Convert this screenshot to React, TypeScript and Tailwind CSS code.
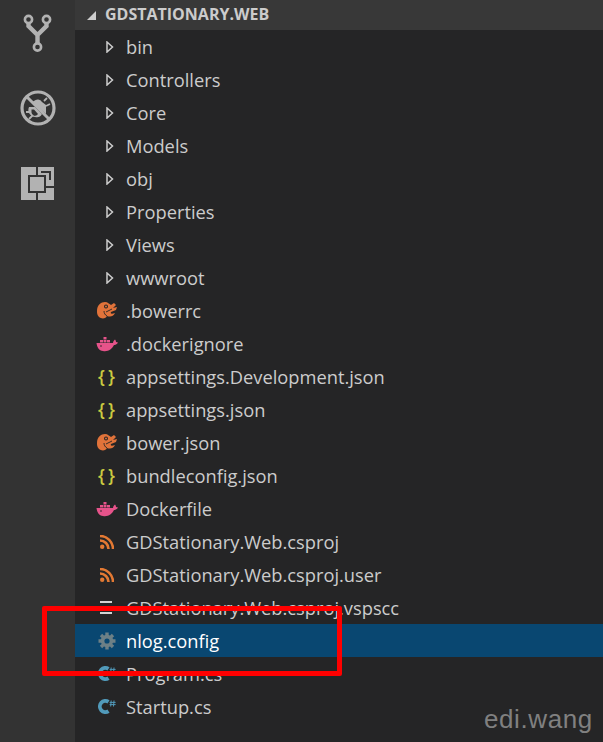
const folders = ['bin', 'Controllers', 'Core', 'Models', 'obj', 'Properties', 'Views', 'wwwroot']

type FileKind = 'bower' | 'docker' | 'json' | 'rss' | 'lines' | 'gear' | 'csharp'

const files: { name: string; kind: FileKind; selected?: boolean }[] = [
  { name: '.bowerrc', kind: 'bower' },
  { name: '.dockerignore', kind: 'docker' },
  { name: 'appsettings.Development.json', kind: 'json' },
  { name: 'appsettings.json', kind: 'json' },
  { name: 'bower.json', kind: 'bower' },
  { name: 'bundleconfig.json', kind: 'json' },
  { name: 'Dockerfile', kind: 'docker' },
  { name: 'GDStationary.Web.csproj', kind: 'rss' },
  { name: 'GDStationary.Web.csproj.user', kind: 'rss' },
  { name: 'GDStationary.Web.csproj.vspscc', kind: 'lines' },
  { name: 'nlog.config', kind: 'gear', selected: true },
  { name: 'Program.cs', kind: 'csharp' },
  { name: 'Startup.cs', kind: 'csharp' },
]

function GitIcon() {
  return (
    <svg width="30" height="39" viewBox="0 0 30 39" fill="none" stroke="#b2b2b2">
      <circle cx="5.5" cy="5.5" r="3.6" strokeWidth="2.6" />
      <circle cx="23.5" cy="5.5" r="3.6" strokeWidth="2.6" />
      <circle cx="14.5" cy="33" r="3.6" strokeWidth="2.6" />
      <path d="M5.5 9 V12 L14.5 21 L23.5 12 V9 M14.5 21 V29" strokeWidth="4.4" />
    </svg>
  )
}

function DebugIcon() {
  return (
    <svg width="36" height="36" viewBox="0 0 36 36" fill="none" stroke="#b2b2b2">
      <circle cx="18" cy="18" r="16" strokeWidth="3.2" />
      <path d="M7 7 L29 29" strokeWidth="3" />
      {/* bug, split in two by the slash */}
      <path d="M14 11 a5 5 0 0 1 8 1 L26 15 V24 L12 12 Z" fill="#b2b2b2" stroke="none" />
      <path d="M9 17 h6 l7 7 a6 6 0 0 1 -7 3 a7 7 0 0 1 -6 -10 Z" fill="#b2b2b2" stroke="none" />
      <path d="M11.5 19.5 h2.5 l4 4.5 a3.5 3.5 0 0 1 -6.5 -1.5 Z" fill="#333333" stroke="none" />
      <path d="M6 22 l4 0 M9 29 l4 -4 M27 8 l-3 3 M30 14 l-4 2" strokeWidth="1.8" />
    </svg>
  )
}

function ExtensionsIcon() {
  return (
    <svg width="33" height="33" viewBox="0 0 33 33">
      <rect width="33" height="33" fill="#b2b2b2" />
      <rect x="8" y="9" width="16" height="16" fill="#b2b2b2" stroke="#333333" strokeWidth="2" />
      <path d="M16 0 V8 M16 26 V33 M25 20 H33" stroke="#333333" strokeWidth="2" fill="none" />
      <path d="M20 5 H29 V13" stroke="#333333" strokeWidth="2" fill="none" />
    </svg>
  )
}

function BowerIcon() {
  return (
    <svg width="20" height="17" viewBox="0 0 20 17">
      <path d="M0 9 C0 3 4 0 8 0 C11 0 12 2 14 3 L17 1 L19 3 L16 6 L20 5 L19 8 L14 10 C13 12 15 12 18 11 C16 15 13 15 10 14 C9 17 4 17 2 15 C0 13 0 11 0 9 Z" fill="#e1733a" />
      <circle cx="9" cy="4.5" r="2" fill="#252526" />
      <circle cx="9" cy="4.5" r="1" fill="#e1733a" />
      <path d="M15 7 L9 10 M10 14 C8 13 7 11 7 9" stroke="#252526" strokeWidth="0.9" fill="none" />
    </svg>
  )
}

function DockerIcon() {
  return (
    <svg width="22" height="16" viewBox="0 0 22 16">
      <path d="M0.5 7 H17 C17 5 18.5 4 19 3.5 C20 4.5 20 6 20 6 L22 6.5 C21 8.5 19 9 18 9 C16 13 12 16 7 15 C3 15 1 11 0.5 7 Z" fill="#e6538a" />
      <path d="M4 4 h3 v2.5 h-3 Z M7.5 4 h3 v2.5 h-3 Z M11 4 h3 v2.5 h-3 Z M7.5 1 h3 v2.5 h-3 Z" fill="#e6538a" />
      <circle cx="5" cy="10" r="0.8" fill="#252526" />
    </svg>
  )
}

function RssIcon() {
  return (
    <svg width="14" height="14" viewBox="0 0 14 14" fill="none" stroke="#e37933">
      <circle cx="2.2" cy="11.8" r="2.2" fill="#e37933" stroke="none" />
      <path d="M0 5.5 A8.5 8.5 0 0 1 8.5 14" strokeWidth="2.6" />
      <path d="M0 1 A13 13 0 0 1 13 14" strokeWidth="2.6" />
    </svg>
  )
}

function LinesIcon() {
  return (
    <svg width="13" height="13" viewBox="0 0 13 13" fill="#d4d4d4">
      <rect x="0" y="0" width="12" height="2" />
      <rect x="3" y="5" width="9" height="2" />
      <rect x="0" y="11" width="12" height="2" />
    </svg>
  )
}

function GearIcon() {
  return (
    <svg width="18" height="18" viewBox="0 0 18 18" fill="none" stroke="#6d8086">
      <circle cx="9" cy="9" r="4.4" strokeWidth="3.6" />
      <path
        d="M9 0.5 V4 M9 14 V17.5 M0.5 9 H4 M14 9 H17.5 M3 3 L5.4 5.4 M12.6 12.6 L15 15 M15 3 L12.6 5.4 M5.4 12.6 L3 15"
        strokeWidth="3.4"
      />
    </svg>
  )
}

function CsharpIcon() {
  return (
    <svg width="18" height="17" viewBox="0 0 18 17" fill="none" stroke="#519aba">
      <path d="M10.5 3.8 A5.6 5.6 0 1 0 10.5 13.2" strokeWidth="3.8" />
      <path d="M13.2 2.5 L12.7 8.5 M16 2.5 L15.5 8.5 M11.6 4.4 H17.6 M11.6 6.6 H17.6" strokeWidth="1" />
    </svg>
  )
}

function FileIcon({ kind }: { kind: FileKind }) {
  switch (kind) {
    case 'bower': return <BowerIcon />
    case 'docker': return <DockerIcon />
    case 'json':
      return (
        <span className="flex gap-[3px] text-[18px] font-semibold text-[#cbcb41]">
          <span>{'{'}</span>
          <span>{'}'}</span>
        </span>
      )
    case 'rss': return <RssIcon />
    case 'lines': return <LinesIcon />
    case 'gear': return <GearIcon />
    case 'csharp': return <CsharpIcon />
  }
}

export default function App() {
  return (
    <div className="relative flex h-[742px] w-[603px] overflow-hidden bg-[#252526] font-['Open_Sans',sans-serif] text-[18.3px] text-[#cccccc]">
      <div className="flex w-[75px] shrink-0 flex-col items-center bg-[#333333] pt-[14px]">
        <GitIcon />
        <div className="mt-[37px]"><DebugIcon /></div>
        <div className="mt-[41px]"><ExtensionsIcon /></div>
      </div>

      <div className="min-w-0 flex-1">
        <div className="flex h-[30px] items-center bg-[#383838] pl-[12px]">
          <svg width="9" height="9" viewBox="0 0 9 9" className="mr-[9px]"><path d="M9 0 V9 H0 Z" fill="#cccccc" /></svg>
          <span className="pb-[2px] text-[16px] font-bold text-[#cccccc]">GDSTATIONARY.WEB</span>
        </div>

        {folders.map(name => (
          <div key={name} className="flex h-[33px] items-center">
            <svg width="8" height="12" viewBox="0 0 8 12" className="ml-[31px] mr-[12px]" fill="none" stroke="#cccccc" strokeWidth="1.5">
              <path d="M1 1 L6.5 6 L1 11 Z" />
            </svg>
            <span>{name}</span>
          </div>
        ))}

        {files.map(file => (
          <div key={file.name} className={`flex h-[33px] items-center ${file.selected ? 'bg-[#094771] text-white' : ''}`}>
            <div className="ml-[19px] mr-[7px] flex w-[25px] items-center justify-center">
              <FileIcon kind={file.kind} />
            </div>
            <span>{file.name}</span>
          </div>
        ))}
      </div>

      {/* annotation box drawn over the tree */}
      <div className="absolute left-[42px] top-[606px] h-[70px] w-[300px] rounded-[2px] border-[5px] border-[#ff0000]" />
      <div className="absolute left-[484px] top-[703px] font-['Liberation_Sans',sans-serif] text-[26px] leading-[32px] tracking-[0.6px] text-[#808080]">edi.wang</div>
    </div>
  )
}
